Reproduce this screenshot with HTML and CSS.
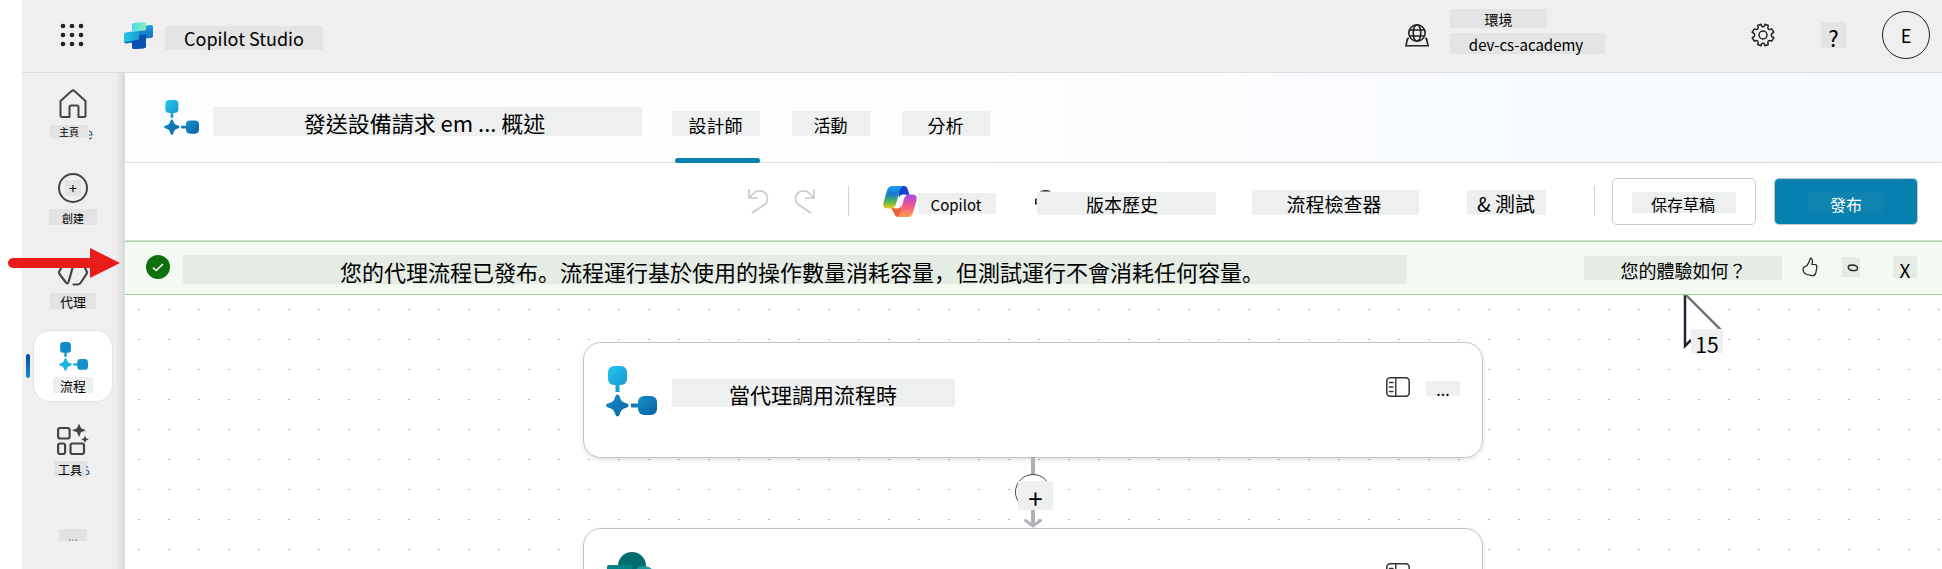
FILE: index.html
```html
<!DOCTYPE html>
<html lang="zh-Hant">
<head>
<meta charset="utf-8">
<title>Copilot Studio</title>
<link rel="stylesheet" href="styles.css">
</head>
<body>
<svg class="defs" aria-hidden="true">
  <defs>
    <linearGradient id="flow-light" x1="0" y1="0" x2="1" y2="1"><stop offset="0" stop-color="#25c5ee"/><stop offset="1" stop-color="#1797cf"/></linearGradient>
    <linearGradient id="flow-dark" x1="0" y1="0" x2="1" y2="1"><stop offset="0" stop-color="#158fca"/><stop offset="1" stop-color="#0864a0"/></linearGradient>
    <symbol id="flow" viewBox="0 0 51 51">
      <path d="M11.500 17v9" stroke="#1a9fd6" stroke-width="4"/>
      <path d="M25 39.500h9" stroke="#0f7cb8" stroke-width="4"/>
      <rect x="2" y="0" width="19" height="19" rx="6" fill="url(#flow-light)"/>
      <rect x="32" y="30" width="19" height="19" rx="6" fill="url(#flow-dark)"/>
      <path d="M11.500 28.500c1.200 0 1.800 1 2.200 2.200 1.300 4.200 2.400 5.300 6.600 6.600 1.200.4 2.200 1 2.200 2.200s-1 1.800-2.200 2.200c-4.200 1.300-5.300 2.400-6.600 6.600-.4 1.200-1 2.200-2.200 2.200s-1.800-1-2.200-2.200c-1.300-4.200-2.400-5.300-6.600-6.600C1.500 41.300 0 40.700 0 39.500s1.500-1.800 2.700-2.200c4.200-1.300 5.300-2.400 6.600-6.600.4-1.200 1-2.200 2.200-2.200z" fill="url(#flow-dark)"/>
    </symbol>
    <symbol id="flow-nav" viewBox="0 0 51 51">
      <path d="M11.500 17v9" stroke="#1487c8" stroke-width="4"/>
      <path d="M25 39.500h9" stroke="#1aa8dc" stroke-width="4"/>
      <rect x="2" y="0" width="19" height="19" rx="6" fill="#108ccb"/>
      <rect x="32" y="30" width="19" height="19" rx="6" fill="#1290cf"/>
      <path d="M11.500 28.500c1.200 0 1.800 1 2.200 2.200 1.300 4.200 2.400 5.300 6.600 6.600 1.200.4 2.200 1 2.200 2.200s-1 1.800-2.200 2.200c-4.200 1.300-5.300 2.400-6.600 6.600-.4 1.200-1 2.200-2.200 2.200s-1.800-1-2.200-2.200c-1.300-4.200-2.400-5.300-6.600-6.600C1.500 41.300 0 40.700 0 39.500s1.500-1.800 2.700-2.200c4.200-1.300 5.300-2.400 6.600-6.600.4-1.200 1-2.200 2.200-2.200z" fill="#1cb6e2"/>
    </symbol>
    <symbol id="panel" viewBox="0 0 24 20">
      <rect x="0.800" y="0.800" width="22.400" height="18.400" rx="3.500" fill="none" stroke="#333" stroke-width="1.500"/>
      <path d="M9.800 1v18M3.500 5.500H7M3.500 10H7M3.500 14.500H7" fill="none" stroke="#333" stroke-width="1.400" stroke-linecap="round"/>
    </symbol>
  </defs>
</svg>
<header class="topbar">
  <button class="plain waffle" aria-label="應用程式啟動器"><svg width="24" height="24" viewBox="0 0 24 24" fill="#222"><circle cx="3" cy="3" r="2.300"/><circle cx="12" cy="3" r="2.300"/><circle cx="21" cy="3" r="2.300"/><circle cx="3" cy="12" r="2.300"/><circle cx="12" cy="12" r="2.300"/><circle cx="21" cy="12" r="2.300"/><circle cx="3" cy="21" r="2.300"/><circle cx="12" cy="21" r="2.300"/><circle cx="21" cy="21" r="2.300"/></svg></button>
  <svg class="logo" width="29" height="27" viewBox="0 0 29 27">
    <defs>
      <linearGradient id="lg1" x1="0" y1="0" x2="1" y2="0"><stop offset="0" stop-color="#4dd8f0"/><stop offset="1" stop-color="#8ff0b4"/></linearGradient>
      <linearGradient id="lg2" x1="0" y1="0" x2="0" y2="1"><stop offset="0" stop-color="#1a9bdc"/><stop offset="1" stop-color="#0b52a8"/></linearGradient>
      <linearGradient id="lg3" x1="0" y1="0" x2="1" y2="0"><stop offset="0" stop-color="#22c7e6"/><stop offset="1" stop-color="#1b9fd0"/></linearGradient>
    </defs>
    <path d="M0 13l14-2v9l-12 1.500q-2 0-2-2z" fill="#0b76b8"/>
    <path d="M20 4l7-1q2 0 2 2v9q0 1.500-1.500 1.800L22 16.500V24q0 2-2 2.200l-10 .8q-2 0-2-2v-6.500l6-1V9z" fill="url(#lg2)"/>
    <path d="M8 19l6-1.200q1-.3 1-1.500v-3l7-1V24q0 2-2 2.200l-10 .8q-2 0-2-2z" fill="#0752b0"/>
    <path d="M0 12q0-1.300 1.500-1.600L8 9.500l7-.5v7q0 1.500-1.500 1.700L0 20z" fill="url(#lg3)"/>
    <path d="M8 3q0-1.800 1.800-2L20 0q2 0 2 1.800V7q0 1.300-1.500 1.500L8 9.500z" fill="url(#lg1)"/>
  </svg>
  <span class="chip brand">Copilot Studio</span>
  <div class="env">
    <svg width="24" height="23" viewBox="0 0 24 23" fill="none" stroke="#222" stroke-width="1.600"><circle cx="12" cy="9" r="8.200"/><ellipse cx="12" cy="9" rx="3.800" ry="8.200"/><path d="M4.500 6h15M4.500 12h15M4 14.500H2.500L.9 21.800h22.200L21.500 14.500H20"/></svg>
    <div class="env-text"><span class="chip env-label">環境</span><span class="chip env-name">dev-cs-academy</span></div>
  </div>
  <button class="plain gear" aria-label="設定"><svg width="24" height="24" viewBox="0 0 24 24" fill="none" stroke="#222" stroke-width="1.500" stroke-linejoin="round"><circle cx="12" cy="12" r="4"/><path d="M10 1.200q.3 2.600 2 2.600t2-2.600l3.300 1.300q-1 2.500 0 3.500t3.300-.2l2.200 3.400q-2.600 1.200-2.600 2.800t2.600 2.800l-2.200 3.400q-2.300-1.200-3.300-.2t0 3.500L14 22.800q-.3-2.600-2-2.600t-2 2.600l-3.300-1.300q1-2.500 0-3.500t-3.300.2L1.200 14.800q2.600-1.200 2.600-2.800T1.200 9.200l2.200-3.400q2.300 1.200 3.300.2t0-3.500z"/></svg></button>
  <button class="chip help">?</button>
  <button class="avatar">E</button>
</header>
<div class="shell">
  <nav class="sidebar">
    <a class="item" href="#"><svg width="30" height="30" viewBox="0 0 30 30" fill="none" stroke="#444" stroke-width="2" stroke-linejoin="round"><path d="M2.500 12L13.600 2q1.400-1.200 2.800 0l11.100 10v14.500q0 1.500-1.500 1.500h-5.500V18q0-1.500-1.500-1.500h-6q-1.500 0-1.500 1.500v10H4q-1.500 0-1.500-1.500z"/></svg><span class="chip nav-home">主頁</span><svg class="edge" width="4" height="10" viewBox="0 0 4 10" fill="none" stroke="#2b5c9c" stroke-width="1.200"><path d="M0 1q3 .5 2.800 4H0M0 9l3-1"/></svg></a>
    <a class="item" href="#"><span class="create-ring"><span class="chip create-plus">+</span></span><span class="chip nav-create">創建</span></a>
    <a class="item" href="#"><svg width="30" height="30" viewBox="0 0 30 30" fill="none" stroke="#444" stroke-width="2.200" stroke-linecap="round" stroke-linejoin="round"><path d="M16.500 4l-6 21q-1 3-3 0L1.500 17q-1-1.500 0-3L7 4zM21 3h2l5.500 11q1 1.500 0 3L22.500 26q-1 1.500-3 1.500h-4"/></svg><span class="chip nav-agent">代理</span></a>
    <a class="item selected" href="#" aria-current="page"><svg width="29" height="29"><use href="#flow-nav"/></svg><span class="chip nav-flow">流程</span></a>
    <a class="item" href="#"><svg class="tools" width="32" height="32" viewBox="0 0 32 32" fill="none" stroke="#444" stroke-width="2.200"><rect x="1.100" y="5" width="11.500" height="10.500" rx="2"/><rect x="1.100" y="20.500" width="7" height="10.500" rx="2"/><rect x="13.500" y="20.500" width="13.500" height="10.500" rx="2"/><path d="M22 .5l2 4.700 5 2-5 2-2 4.700-2-4.700-5-2 5-2zM28 12.500l1.200 2.700 2.600 1.100-2.600 1.200L28 20l-1.200-2.500-2.600-1.200 2.600-1.100z" fill="#444" stroke="none"/></svg><span class="chip nav-tools">工具</span><svg class="edge tools-edge" width="4" height="10" viewBox="0 0 4 10" fill="none" stroke="#2b5c9c" stroke-width="1.200"><path d="M2 1H0M0 4q3 .5 3 2.500T0 8.500"/></svg></a>
    <button class="chip nav-more" aria-label="更多">...</button>
  </nav>
  <main class="main">
    <div class="page-head">
      <svg width="35" height="35"><use href="#flow"/></svg>
      <h1 class="chip title">發送設備請求 em ... 概述</h1>
      <div class="tabs">
        <a class="tab active" href="#"><span class="chip tab-text">設計師</span></a>
        <a class="tab second" href="#"><span class="chip tab-text">活動</span></a>
        <a class="tab" href="#"><span class="chip tab-text">分析</span></a>
      </div>
    </div>
    <div class="toolbar">
      <button class="plain" aria-label="復原"><svg width="22" height="26" viewBox="0 0 22 26" fill="none" stroke="#c8c8c8" stroke-width="1.600"><path d="M2 1v9h9M2 10l5.500-5.500a8 8 0 0 1 11.200 11.300L5 25"/></svg></button>
      <button class="plain redo" aria-label="重做"><svg width="22" height="26" viewBox="0 0 22 26" fill="none" stroke="#c8c8c8" stroke-width="1.600"><path d="M20 1v9h-9M20 10l-5.500-5.500A8 8 0 0 0 3.300 15.800L17 25"/></svg></button>
      <span class="rule"></span>
      <button class="plain copilot">
        <svg width="34" height="31" viewBox="0 0 34 31">
          <defs>
            <linearGradient id="c1" x1="0" y1="0" x2="0" y2="1"><stop offset="0" stop-color="#19a5ee"/><stop offset=".35" stop-color="#1677d2"/><stop offset=".7" stop-color="#57b956"/><stop offset="1" stop-color="#f6cc17"/></linearGradient>
            <linearGradient id="c2" x1="0" y1="0" x2="0" y2="1"><stop offset="0" stop-color="#a649e8"/><stop offset=".5" stop-color="#f0568c"/><stop offset="1" stop-color="#ff9d4d"/></linearGradient>
          </defs>
          <path d="M15 0h6q3 0 4 4l1.500 5H20q-3 0-4 3z" fill="#1545cf"/>
          <path d="M8 22h6l4-3 2 12h-5q-3 0-4-4z" fill="#f0603a"/>
          <path d="M9 0h11q-2 1-3 4l-4 14q-1.500 4.500-5 4.500H5q-6 0-4.500-6L4 4.500Q5.300 0 9 0z" fill="url(#c1)"/>
          <path d="M25 31H14q2-1 3-4l4-14q1.500-4.500 5-4.500h3q6 0 4.500 6L30 26.500Q28.700 31 25 31z" fill="url(#c2)"/>
          <path d="M16.500 11q1-2.500 3.500-2.500h3q-2 1-3 4l-2.500 8q-1 2-3 2H11q2-1 3-4z" fill="#fff"/>
        </svg><span class="chip copilot-text">Copilot</span></button>
      <button class="chip history">版本歷史<svg class="history-arc" width="22" height="22" viewBox="0 0 22 22" fill="none" stroke="#222" stroke-width="2"><circle cx="10.500" cy="11" r="10"/></svg></button>
      <button class="chip checker">流程檢查器</button>
      <button class="chip test">&amp; 測試</button>
      <span class="rule"></span>
      <button class="btn save"><span class="chip save-text">保存草稿</span></button>
      <button class="btn publish"><span class="chip publish-text">發布</span></button>
    </div>
    <div class="banner" role="status">
      <svg width="24" height="24" viewBox="0 0 24 24"><circle cx="12" cy="12" r="12" fill="#107010"/><path d="M7 12.500l3.200 3L17 9" fill="none" stroke="#fff" stroke-width="1.500"/></svg>
      <p class="chip message">您的代理流程已發布。流程運行基於使用的操作數量消耗容量，但測試運行不會消耗任何容量。</p>
      <span class="chip ask">您的體驗如何？</span>
      <button class="plain" aria-label="讚"><svg width="16" height="20" viewBox="0 0 16 20" fill="none" stroke="#222" stroke-width="1.200" stroke-linejoin="round"><path d="M8.500 1q2 .2 2 3.500L9.800 7.500H13q2.200.3 1.900 3l-1.200 5.500q-.8 3-3.700 2.700l-5-1.200Q2.500 17 1.500 14.500L1 12.500q-.2-2 1.700-2.600Q5.500 9 6.500 6z"/></svg></button>
      <button class="chip down" aria-label="倒讚"><svg width="12" height="8" viewBox="0 0 12 8" fill="none" stroke="#222" stroke-width="1.400"><path d="M2 1.500q4-1 7 .3 2.500 2 1 4-3 1.500-7 .2-3-2-1-4.500z"/></svg></button>
      <button class="chip close">X</button>
    </div>
    <div class="canvas">
      <article class="card">
        <svg width="51" height="51"><use href="#flow"/></svg>
        <h2 class="chip card-title">當代理調用流程時</h2>
        <button class="plain card-panel" aria-label="面板"><svg width="24" height="20"><use href="#panel"/></svg></button>
        <button class="chip card-more">...</button>
      </article>
      <div class="connector">
        <svg width="40" height="71" viewBox="0 0 40 71" fill="none"><path d="M20 0v18M20 53v16" stroke="#b0b0b8" stroke-width="4"/><path d="M12.500 63.500L20 69l7.500-5.500" stroke="#b0b0b8" stroke-width="3" stroke-linecap="round"/><circle cx="20" cy="35" r="17.500" fill="#fff" stroke="#444"/></svg>
        <button class="chip add">+</button>
      </div>
      <article class="card">
        <svg width="51" height="51" viewBox="0 0 51 51"><circle cx="26" cy="14" r="14" fill="#036c70"/><circle cx="38" cy="26" r="12" fill="#1a9ba1"/><circle cx="28" cy="40" r="10" fill="#37c6d0"/><rect x="1" y="13" width="25" height="25" rx="2" fill="#038387"/></svg>
        <span class="spacer"></span>
        <button class="plain card-panel" aria-label="面板"><svg width="24" height="20"><use href="#panel"/></svg></button>
      </article>
      <div class="pointer">
        <svg width="42" height="58" viewBox="0 0 42 58"><path d="M3 1v52l7-6h8l20-11z" fill="#fff"/><path d="M3 0v53l6-6" fill="none" stroke="#223" stroke-width="2.500"/><path d="M3 1l35 35v6" fill="none" stroke="#777" stroke-width="2.500"/></svg>
        <span class="chip count">15</span>
      </div>
    </div>
  </main>
</div>
<svg class="red-arrow" width="112" height="30" viewBox="0 0 112 30"><path d="M5 10h77V0l30 15-30 15V20H5a5 5 0 0 1 0-10z" fill="#e91c1c"/></svg>
</body>
</html>
```
FILE: styles.css
```css
* { box-sizing: border-box; }
body {
  margin: 0;
  height: 100vh;
  padding-left: 22px;
  display: flex;
  flex-direction: column;
  overflow: hidden;
  position: relative;
  background: #fff;
  color: #000;
  font-family: "Noto Sans CJK JP", "Noto Sans CJK TC", sans-serif;
  font-size: 18px;
}
.defs { position: absolute; width: 0; height: 0; }
svg { display: block; flex: none; }
h1, h2, p { margin: 0; font-weight: 400; }
a { color: inherit; text-decoration: none; }
button { font: inherit; color: inherit; border: 0; padding: 0; background: none; flex: none; }
.plain { display: flex; align-items: center; }
.chip {
  display: flex;
  align-items: center;
  justify-content: center;
  flex: none;
  background: #eeefef;
  white-space: nowrap;
}

.topbar {
  flex: none;
  display: flex;
  align-items: center;
  height: 73px;
  padding: 0 12px 2px 38px;
  background: #efefef;
  border-bottom: 1px solid #dcdcdc;
}
.topbar .chip { background: #e3e4e4; }
.logo { margin-left: 40px; }
.brand { width: 158px; height: 24px; margin: 6px auto 0 12px; font-size: 18px; }
.env { display: flex; align-items: center; gap: 21px; }
.env-text { display: flex; flex-direction: column; gap: 5px; margin-bottom: 8px; }
.env-label { width: 97px; height: 19px; padding-top: 2px; font-size: 14px; }
.env-name { width: 155px; height: 21px; padding: 2px 3px 0 0; font-size: 15px; }
.gear { margin-left: 146px; }
.help { width: 25px; height: 26px; margin: 0 36px 0 46px; padding-top: 3px; font-size: 22px; }
.avatar { width: 48px; height: 48px; border: 1px solid #222; border-radius: 50%; font-size: 18px; }

.shell { flex: 1; min-height: 0; display: flex; }
.sidebar {
  flex: none;
  width: 103px;
  display: flex;
  flex-direction: column;
  align-items: center;
  gap: 12px;
  padding: 5px 1px 0 0;
  background: linear-gradient(to right, #efefef 93px, #d8d8d8);
}
.item {
  position: relative;
  display: flex;
  flex-direction: column;
  align-items: center;
  gap: 6px;
  width: 80px;
  height: 72px;
  padding-top: 11px;
  flex: none;
}
.sidebar .chip { background: #e3e3e3; height: 16px; font-size: 13px; }
.item.selected { background: #fff; border: 1px solid #e2e2e2; border-radius: 17px; }
.item.selected::before {
  content: "";
  position: absolute;
  left: -8px;
  top: 23px;
  width: 4px;
  height: 24px;
  border-radius: 2px;
  background: linear-gradient(#0a4a9a, #1490cc);
}
.edge { position: absolute; left: 56px; top: 52px; }
.tools-edge { left: 53px; }
.sidebar .nav-home { width: 38px; height: 13px; margin-right: 8px; font-size: 10px; }
.create-ring { display: flex; align-items: center; justify-content: center; width: 30px; height: 30px; border: 2px solid #444; border-radius: 50%; }
.sidebar .create-plus { width: 16px; font-size: 14px; }
.sidebar .nav-create { width: 48px; padding-top: 2px; font-size: 11px; }
.nav-agent { width: 46px; }
.sidebar .nav-flow { width: 40px; background: #eeefef; }
.tools { margin-top: -2px; }
.sidebar .nav-tools { width: 33px; margin-right: 6px; font-size: 12px; }
.sidebar .nav-more { width: 28px; height: 12px; margin-top: 31px; color: #888; font-size: 12px; }

.main { flex: 1; min-width: 0; display: flex; flex-direction: column; }
.page-head {
  flex: none;
  display: flex;
  align-items: center;
  height: 90px;
  padding-left: 39px;
  border-bottom: 1px solid #dcdcdc;
  background: linear-gradient(to right, #fcfdff, #fefefe 30%, #f5f9fe);
}
.title { width: 429px; height: 29px; margin: 7px 0 0 14px; padding: 2px 6px 0 0; font-size: 22px; }
.tabs { display: flex; align-self: stretch; gap: 32px; margin-left: 30px; }
.tab { position: relative; display: flex; align-items: center; padding-top: 12px; }
.tab.active::after {
  content: "";
  position: absolute;
  left: 3px;
  right: 0;
  bottom: -1px;
  height: 5px;
  border-radius: 3px;
  background: #0680ae;
}
.tab-text { width: 88px; height: 25px; padding: 2px 1px 0 0; font-size: 18px; }
.second .tab-text { width: 78px; font-size: 17px; }

.toolbar {
  flex: none;
  display: flex;
  align-items: center;
  justify-content: flex-end;
  height: 78px;
  padding: 0 24px 1px 0;
  border-bottom: 1px solid #dcdcdc;
}
.redo { margin: 0 32px 0 25px; }
.rule { flex: none; width: 1px; height: 30px; background: #d4d4d4; }
.copilot { margin: 0 41px 0 34px; gap: 1px; }
.copilot-text { width: 78px; height: 21px; margin-top: 4px; padding: 2px 2px 0 0; font-size: 15px; }
.history { position: relative; width: 179px; height: 23px; margin: 4px 36px 0 0; padding: 2px 9px 0 0; }
.history-arc { position: absolute; left: -2px; top: -2px; clip-path: polygon(0 9px, 2px 9px, 2px 2px, 5px 2px, 5px 0, 16px 0, 16px 2px, 2px 2px, 2px 15px, 0 15px); }
.checker { width: 167px; height: 25px; margin: 2px 48px 0 0; padding: 2px 3px 0 0; font-size: 19px; }
.test { width: 79px; height: 25px; margin: 2px 48px 0 0; padding: 2px 1px 0 0; font-size: 20px; }
.btn { display: flex; align-items: center; justify-content: center; width: 144px; height: 47px; border: 1px solid #c8c8c8; border-radius: 5px; font-size: 16px; }
.save { margin: 0 18px 0 17px; }
.save-text { width: 104px; height: 21px; margin-top: 3px; padding: 2px 2px 0 0; }
.publish { background: #0680ae; color: #fff; }
.publish-text { width: 76px; height: 21px; margin-top: 3px; padding-top: 2px; background: #0f83b0; }

.banner {
  flex: none;
  display: flex;
  align-items: center;
  height: 54px;
  padding: 0 25px 2px 21px;
  background: #f2faf2;
  border: solid #9bd59b;
  border-width: 1px 0;
}
.banner .chip { background: #e4ece4; }
.banner .message {
  flex: 0 1 1224px;
  height: 29px;
  margin: 4px auto 0 13px;
  padding: 4px 0 0 14px;
  font-size: 22px;
  font-feature-settings: "locl" 0;
}
.ask { width: 198px; height: 24px; margin: 2px 20px 0 0; padding: 3px 0 0 1px; font-size: 18px; }
.down { width: 18px; height: 20px; margin: 0 33px 0 24px; padding: 2px 0 0 4px; }
.close { width: 24px; height: 22px; padding-top: 4px; font-size: 19px; }

.canvas {
  position: relative;
  flex: 1;
  min-height: 0;
  overflow: hidden;
  display: flex;
  flex-direction: column;
  align-items: center;
  padding: 47px 1px 0 0;
  background: conic-gradient(from 270deg at 2px 1px, #b4b4b4 90deg, transparent 0) 13px 14px / 30px 30px;
}
.card {
  flex: none;
  display: flex;
  align-items: flex-start;
  width: 900px;
  max-width: 90%;
  height: 116px;
  padding: 23px 22px 0;
  border: 1px solid #c4c4c8;
  border-radius: 18px;
  background: #fff;
  box-shadow: 0 2px 5px #0000001c;
}
.card-title { width: 283px; height: 28px; margin: 13px auto 0 15px; padding: 2px 1px 0 0; font-size: 21px; }
.spacer { flex: 1; }
.card-panel { margin: 11px 16px 0 0; }
.spacer + .card-panel { margin-right: 50px; }
.card-more { width: 34px; height: 15px; margin-top: 15px; font-size: 16px; }
.connector { position: relative; flex: none; margin-top: -1px; }
.add { position: absolute; left: 5px; top: 24px; width: 35px; height: 29px; padding-top: 4px; font-size: 26px; }
.pointer { position: absolute; right: 218px; top: -2px; }
.count { position: absolute; left: 9px; top: 36px; width: 32px; height: 24px; padding-top: 5px; font-size: 21px; }
.red-arrow { position: absolute; left: 8px; top: 248px; }
```
